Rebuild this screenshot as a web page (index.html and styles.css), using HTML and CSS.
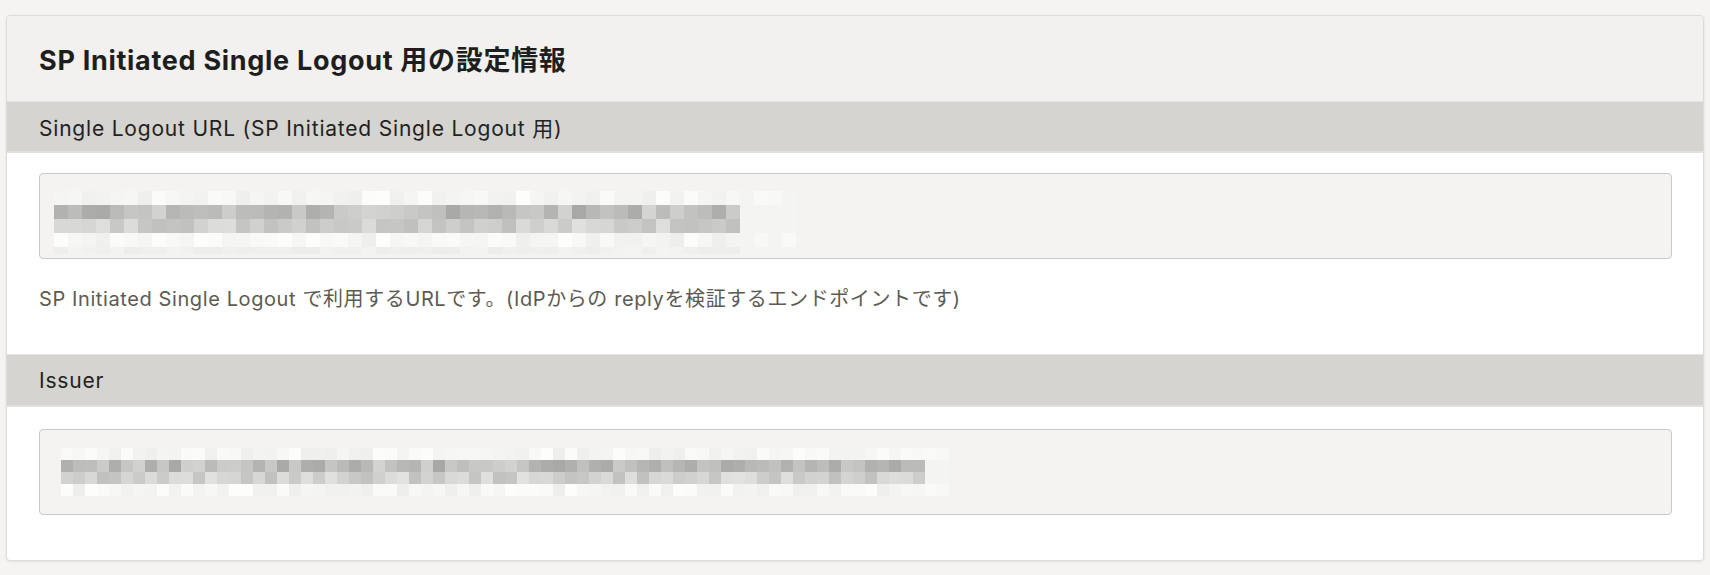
FILE: index.html
```html
<!DOCTYPE html>
<html lang="ja">
<head>
<meta charset="utf-8">
<title>SP Initiated Single Logout 用の設定情報</title>
<link rel="stylesheet" href="styles.css">
</head>
<body>
<section class="card">
  <header class="card-header">
    <h2 class="card-title">SP Initiated Single Logout 用の設定情報</h2>
  </header>
  <div class="field">
    <div class="field-label">Single Logout URL (SP Initiated Single Logout 用)</div>
    <div class="field-body">
      <div class="value-box">
        <div class="mosaic mosaic-a" data-cols="53" data-tail="4" data-seed="7" data-cell="14" data-rows="light,dark,mid,light,faint"></div>
      </div>
      <p class="help">SP Initiated Single Logout で利用するURLです。(IdPからの replyを検証するエンドポイントです)</p>
    </div>
  </div>
  <div class="field">
    <div class="field-label field-label-tall">Issuer</div>
    <div class="field-body field-body-last">
      <div class="value-box">
        <div class="mosaic mosaic-b" data-cols="74" data-tail="2" data-seed="13" data-cell="12" data-rows="light,dark,mid,light"></div>
      </div>
    </div>
  </div>
</section>
<script src="mosaic.js"></script>
</body>
</html>
```

FILE: styles.css
```css
* { box-sizing: border-box; }

html, body {
  margin: 0;
  padding: 0;
}

body {
  background: #f5f4f2;
  font-family: "Inter", "Noto Sans CJK JP", sans-serif;
  color: #222;
  padding: 15px 6px 15px 6px;
}

.card {
  background: #ffffff;
  border: 1px solid #dddcd9;
  border-radius: 4px;
  box-shadow: 0 1px 3px rgba(0, 0, 0, 0.08);
  overflow: hidden;
}

.card-header {
  background: #f2f1ef;
  height: 85px;
  display: flex;
  align-items: center;
  padding: 0 32px;
}

.card-title {
  margin: 0;
  font-size: 27px;
  font-weight: 700;
  color: #1e1e1e;
  letter-spacing: 0.7px;
}

.field-label {
  background: #d5d4d0;
  border-top: 1px solid #e4e3e0;
  border-bottom: 2px solid #e1e0dd;
  height: 52px;
  display: flex;
  align-items: center;
  padding: 0 32px;
  font-size: 21px;
  letter-spacing: 0.8px;
  color: #222;
}

.field-label-tall {
  height: 53px;
}

.field-body {
  padding: 20px 31px 41px 32px;
}

.field-body-last {
  padding-top: 22px;
  padding-bottom: 45px;
}

.value-box {
  height: 86px;
  background: #f4f3f1;
  border: 1px solid #c9c9c6;
  border-radius: 4px;
  display: flex;
  align-items: center;
  padding: 0 14px;
}

.mosaic-a {
  padding-top: 12px;
}

.mosaic-b {
  padding-left: 7px;
}

.mosaic-row {
  display: flex;
}

.mosaic-cell {
  flex: none;
}

.help {
  margin: 26px 0 0 0;
  font-size: 20px;
  letter-spacing: 0.6px;
  color: #5d5b53;
  line-height: 28px;
}
```

FILE: mosaic.js
```js
(function () {
  var ranges = {
    light: [238, 253],
    dark: [168, 212],
    mid: [192, 226],
    faint: [236, 244]
  };
  document.querySelectorAll('.mosaic').forEach(function (el) {
    var seed = parseInt(el.dataset.seed, 10);
    var cols = parseInt(el.dataset.cols, 10);
    var tail = parseInt(el.dataset.tail, 10);
    var cell = parseInt(el.dataset.cell, 10);
    var rows = el.dataset.rows.split(',');
    function rnd() {
      seed = (seed * 9301 + 49297) % 233280;
      return seed / 233280;
    }
    rows.forEach(function (kind) {
      var row = document.createElement('div');
      row.className = 'mosaic-row';
      var r = ranges[kind];
      var h = kind === 'faint' ? Math.round(cell / 2) : cell;
      for (var c = 0; c < cols; c++) {
        var v = Math.round(r[0] + rnd() * (r[1] - r[0]));
        if (c >= cols - tail) { v = Math.max(v, 244); }
        var d = document.createElement('span');
        d.className = 'mosaic-cell';
        d.style.width = cell + 'px';
        d.style.height = h + 'px';
        d.style.background = 'rgb(' + v + ',' + v + ',' + (v - 1) + ')';
        row.appendChild(d);
      }
      el.appendChild(row);
    });
  });
})();
```
